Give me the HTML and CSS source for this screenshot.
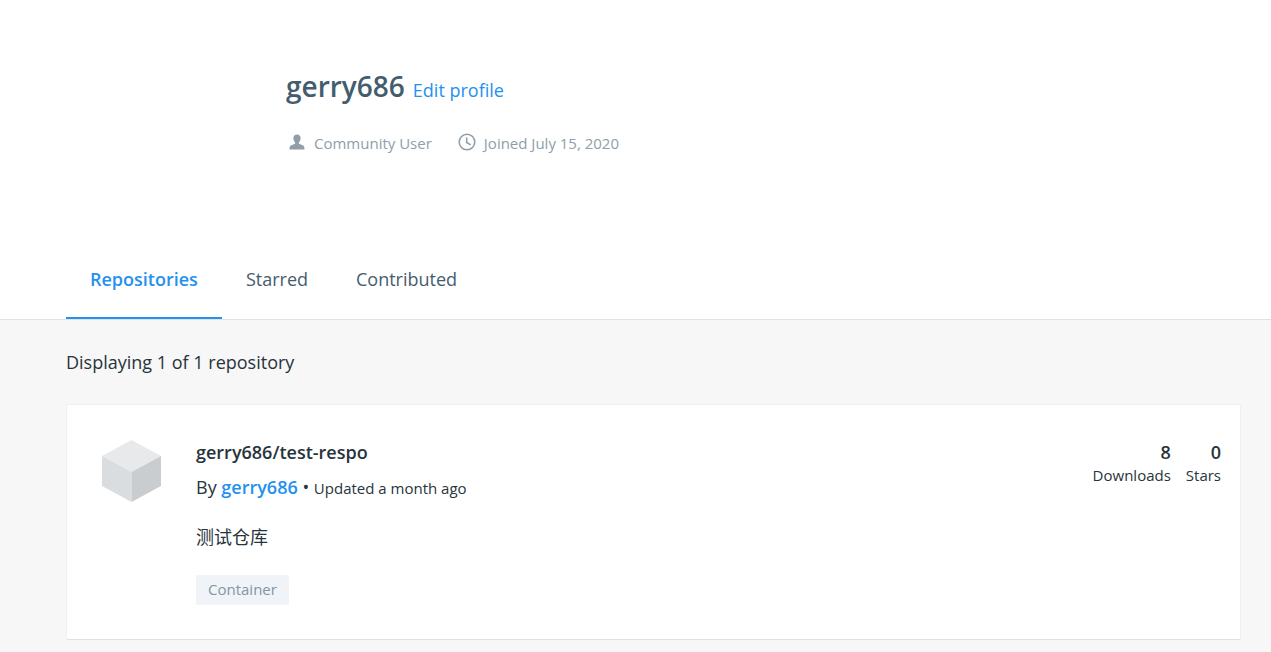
FILE: index.html
```
<!DOCTYPE html>
<html lang="en">
<head>
<meta charset="utf-8">
<title>gerry686 profile</title>
<link rel="stylesheet" href="styles.css">
</head>
<body>
<header class="profile">
  <div class="profile-info">
    <div class="profile-name">
      <h1>gerry686</h1>
      <a href="#edit">Edit profile</a>
    </div>
    <ul class="profile-meta">
      <li>
        <svg class="icon" viewBox="0 0 18 18" aria-hidden="true"><path fill="currentColor" d="M9 1.500C6.800 1.500 5.400 3 5.400 5.200c0 1.700.6 3.200 1.700 4.100v1.500l-3.700 1.400C2 12.800 1.500 13.700 1.500 16.500h15c0-2.800-.5-3.700-1.900-4.300l-3.700-1.400V9.300c1.100-.9 1.700-2.400 1.700-4.100C12.600 3 11.200 1.500 9 1.500z"/></svg>
        <span>Community User</span>
      </li>
      <li>
        <svg class="icon" viewBox="0 0 18 18" aria-hidden="true"><g fill="none" stroke="currentColor" stroke-width="1.600"><circle cx="9" cy="9" r="7.800"/><path d="M8.700 4.500v5l4 2.400"/></g></svg>
        <span>Joined July 15, 2020</span>
      </li>
    </ul>
  </div>
  <nav class="tabs">
    <a class="tab tab-active" href="#repositories">Repositories</a>
    <a class="tab" href="#starred">Starred</a>
    <a class="tab" href="#contributed">Contributed</a>
  </nav>
</header>
<main class="content">
  <p class="summary">Displaying 1 of 1 repository</p>
  <article class="card">
    <svg class="logo" viewBox="0 0 59 62" aria-hidden="true"><path fill="#e7e9eb" d="M29.500 0L59 16 29.500 32 0 16z"/><path fill="#dadddf" d="M0 16l29.500 16v30L0 46z"/><path fill="#c9cdd0" d="M59 16L29.500 32v30L59 46z"/></svg>
    <div class="details">
      <h2>gerry686/test-respo</h2>
      <p class="byline">By <a href="#gerry686">gerry686</a> • <small>Updated a month ago</small></p>
      <p class="description" lang="zh">测试仓库</p>
      <span class="tag">Container</span>
    </div>
    <dl class="stats">
      <div><dt>Downloads</dt><dd>8</dd></div>
      <div><dt>Stars</dt><dd>0</dd></div>
    </dl>
  </article>
</main>
</body>
</html>
```
FILE: styles.css
```
* {
  box-sizing: border-box;
}

body {
  margin: 0;
  min-height: 100vh;
  background: #f7f7f7;
  color: #27343b;
  font: 18px/24px "Open Sans", "Noto Sans CJK SC", sans-serif;
}

h1, h2, p, ul, dl, dd {
  margin: 0;
  padding: 0;
}

a {
  color: #2391f0;
  text-decoration: none;
}

.profile {
  background: #fff;
  border-bottom: 1px solid #e1e2e6;
  padding: 63px 30px 0 66px;
}

.profile-info {
  padding-left: 220px;
}

.profile-name {
  display: flex;
  align-items: baseline;
  gap: 8px;
}

.profile-name h1 {
  color: #445d6e;
  font-size: 28px;
  font-weight: 600;
  line-height: 46px;
}

.profile-meta {
  display: flex;
  gap: 26px;
  margin-top: 21px;
  padding-left: 2px;
  color: #8f9ea8;
  font-size: 15px;
  line-height: 26px;
  list-style: none;
}

.profile-meta li {
  display: flex;
  gap: 8px;
}

.icon {
  width: 18px;
  height: 18px;
  margin-top: 3px;
}

.tabs {
  display: flex;
  margin-top: 84px;
}

.tab {
  padding: 27px 24px 26px;
  border-bottom: 2px solid transparent;
  color: #445d6e;
}

.tab-active {
  border-color: #2391f0;
  color: #2391f0;
  font-weight: 600;
}

.content {
  padding: 30px 30px 12px 66px;
}

.card {
  display: flex;
  gap: 35px;
  margin-top: 30px;
  padding: 35px 19px 34px 35px;
  background: #fff;
  border: 1px solid #f0f0f1;
  border-bottom-color: #dfe0e3;
  border-radius: 2px;
}

.logo {
  width: 59px;
  height: 62px;
}

.details {
  flex: 1;
}

h2 {
  font-size: 18px;
  font-weight: 600;
  line-height: 24px;
}

.byline {
  margin-top: 11px;
}

.byline a {
  font-weight: 600;
}

.byline small {
  font-size: 15px;
}

.description {
  margin-top: 25px;
}

.tag {
  display: inline-block;
  margin-top: 26px;
  padding: 2px 12px 4px;
  background: #f0f3f7;
  border-radius: 2px;
  color: #8496a3;
  font-size: 15px;
}

.stats {
  display: flex;
  gap: 15px;
}

.stats div {
  display: flex;
  flex-direction: column-reverse;
  justify-content: flex-end;
  text-align: right;
}

.stats dt {
  font-size: 15px;
  line-height: 22px;
}

.stats dd {
  font-weight: 600;
}
```
